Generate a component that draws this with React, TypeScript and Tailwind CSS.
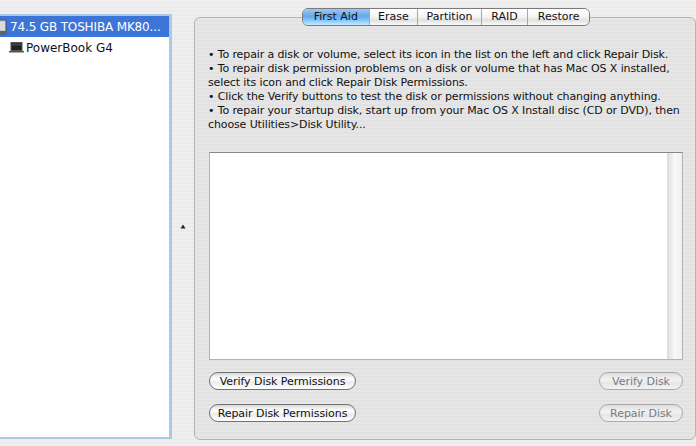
const font = "font-['DejaVu_Sans',sans-serif]";

const stripes = 'bg-[repeating-linear-gradient(180deg,#efefef_0px,#efefef_2px,#ebebeb_2px,#ebebeb_4px)]';

const panelStripes = 'bg-[repeating-linear-gradient(180deg,#e6e6e6_0px,#e6e6e6_2px,#e2e2e2_2px,#e2e2e2_4px)]';

const tabs = [
  { label: 'First Aid', w: 'w-[66px]' },
  { label: 'Erase', w: 'w-[49px]' },
  { label: 'Partition', w: 'w-[64px]' },
  { label: 'RAID', w: 'w-[47px]' },
  { label: 'Restore', w: 'w-[62px]' },
];

function DiskIcon() {
  return (
    <svg width="7" height="16" viewBox="0 0 7 16" className="shrink-0">
      <rect x="-6" y="1" width="12" height="14" rx="1" fill="#c4c6c9" stroke="#4f5359" />
      <path d="M0 4h5M0 6h5M0 8h5M0 10h5" stroke="#f2f3f4" />
      <rect x="-6" y="12" width="12" height="3" fill="#5f6369" />
    </svg>
  );
}

function LaptopIcon() {
  return (
    <svg width="15" height="11" viewBox="0 0 15 11" className="shrink-0">
      <rect x="2" y="0.5" width="11" height="8" fill="#222" stroke="#555" />
      <path d="M3 1.5h9v2H3z" fill="#444" />
      <path d="M0 9.5h15" stroke="#555" />
      <path d="M0 10.5h15" stroke="#aaa" />
    </svg>
  );
}

function AquaButton({ label, width, disabled }: { label: string; width: string; disabled?: boolean }) {
  return (
    <button
      type="button"
      className={`${width} h-[18px] rounded-full border text-[11px] leading-[15px] tracking-[-0.05px] whitespace-nowrap flex items-center justify-center ${
        disabled
          ? 'border-[#aaaaaa] text-[#777b84] bg-[linear-gradient(180deg,#dedede_0%,#f2f2f2_40%,#e6e6e6_65%,#f4f4f4_100%)]'
          : 'border-[#707070] text-[#111111] bg-[linear-gradient(180deg,#d8d8d8_0%,#ffffff_35%,#ececec_60%,#ffffff_100%)]'
      }`}
    >
      {label}
    </button>
  );
}

export default function App() {
  return (
    <div className={`w-[696px] h-[446px] overflow-hidden flex ${stripes} ${font}`}>
      {/* Source list */}
      <div className="w-[172px] h-[425px] mt-[14px] shrink-0 bg-white border-t-2 border-r-[3px] border-b-2 border-[#abc8e6] flex flex-col">
        <div className="h-[21px] bg-[#3b75d8] flex items-center text-white text-[12px] gap-[3px] tracking-[-0.15px] whitespace-nowrap">
          <DiskIcon />
          <span>74.5 GB TOSHIBA MK80...</span>
        </div>
        <div className="h-[21px] flex items-center pl-[9px] gap-[2px] text-[12px] text-[#111111] whitespace-nowrap">
          <LaptopIcon />
          <span>PowerBook G4</span>
        </div>
      </div>

      {/* Splitter */}
      <div className="w-[22px] shrink-0 flex items-center justify-center pt-[6px]">
        <svg width="6" height="5" viewBox="0 0 6 5">
          <path d="M0.5 4.5 L3 0.5 L5.5 4.5 Z" fill="#222" />
        </svg>
      </div>

      {/* First Aid panel */}
      <div className={`w-[502px] h-[423px] mt-[17px] shrink-0 rounded-[6px] border border-[#b4b4b4] ${panelStripes} flex flex-col`}>
        <div className="h-[18px] -mt-[10px] ml-[107px] flex w-[288px] rounded-[6px] border border-[#7a7a7a] overflow-hidden shrink-0">
          {tabs.map((tab, i) => (
            <div
              key={tab.label}
              className={`${tab.w} flex items-center justify-center text-[11px] text-[#111111] whitespace-nowrap ${
                i > 0 ? 'border-l border-[#a8a8a8]' : ''
              } ${
                i === 0
                  ? 'bg-[linear-gradient(180deg,#9cc8f4_0%,#64a8ee_45%,#86c4fa_70%,#c4ecff_100%)]'
                  : 'bg-[linear-gradient(180deg,#ffffff_0%,#f4f4f4_50%,#e0e0e0_70%,#fafafa_100%)]'
              }`}
            >
              {tab.label}
            </div>
          ))}
        </div>

        <div className="mt-[22px] pl-[13px] text-[11px] leading-[14px] tracking-[-0.12px] text-[#111111] whitespace-nowrap">
          <p>• To repair a disk or volume, select its icon in the list on the left and click Repair Disk.</p>
          <p>• To repair disk permission problems on a disk or volume that has Mac OS X installed,</p>
          <p>select its icon and click Repair Disk Permissions.</p>
          <p>• Click the Verify buttons to test the disk or permissions without changing anything.</p>
          <p>• To repair your startup disk, start up from your Mac OS X Install disc (CD or DVD), then</p>
          <p>choose Utilities&gt;Disk Utility...</p>
        </div>

        {/* Log */}
        <div className="mt-[20px] ml-[14px] w-[474px] h-[208px] bg-white border border-[#b4b4b4] border-t-[#888888] flex justify-end shrink-0">
          <div className="w-[15px] bg-[linear-gradient(90deg,#dcdcdc_0%,#f8f8f8_50%,#f0f0f0_100%)]" />
        </div>

        <div className="mt-[12px] ml-[14px] w-[474px] flex justify-between">
          <AquaButton label="Verify Disk Permissions" width="w-[147px]" />
          <AquaButton label="Verify Disk" width="w-[84px]" disabled />
        </div>
        <div className="mt-[14px] ml-[14px] w-[474px] flex justify-between">
          <AquaButton label="Repair Disk Permissions" width="w-[147px]" />
          <AquaButton label="Repair Disk" width="w-[84px]" disabled />
        </div>
      </div>
    </div>
  );
}
